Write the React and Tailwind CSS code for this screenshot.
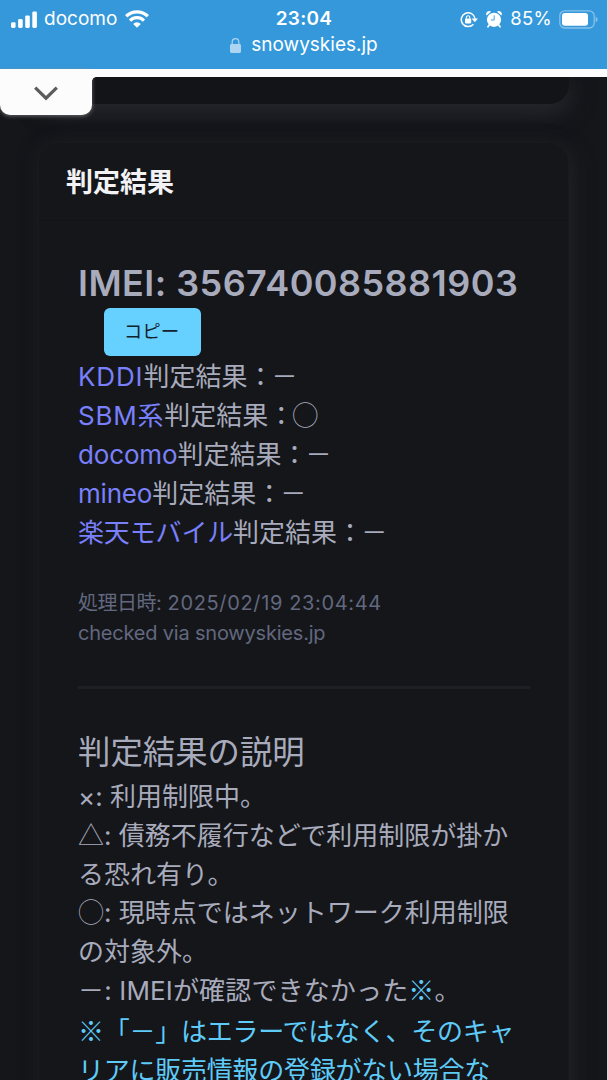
import clsx from "clsx";

const FONT = "font-['Inter','Noto_Sans_CJK_JP',sans-serif]";
const CJK = "font-['Noto_Sans_CJK_JP',sans-serif]";

const RESULTS = [
  { carrier: "KDDI", mark: "－", track: "tracking-[0.85px]" },
  { carrier: "SBM系", mark: "◯", track: "tracking-[0.75px]" },
  { carrier: "docomo", mark: "－", track: "tracking-[-0.15px]" },
  { carrier: "mineo", mark: "－", track: "tracking-[-0.2px]" },
  { carrier: "楽天モバイル", mark: "－", track: "tracking-[-0.15px]" },
];

const NOTES = [
  { sign: "×", text: ": 利用制限中。" },
  { sign: "△", text: ": 債務不履行などで利用制限が掛か", cjk: true },
  { text: "る恐れ有り。" },
  { sign: "◯", text: ": 現時点ではネットワーク利用制限", cjk: true },
  { text: "の対象外。" },
];

const WARNING = ["※「－」はエラーではなく、そのキャ", "リアに販売情報の登録がない場合な"];

function Signal() {
  return (
    <svg className="ml-px h-[17px] w-[26px]" viewBox="0 0 26 17" fill="#fff">
      <rect x="0" y="11.2" width="4.6" height="5.8" rx="1.4" />
      <rect x="7.1" y="8" width="4.6" height="9" rx="1.4" />
      <rect x="14.2" y="4.4" width="4.6" height="12.6" rx="1.4" />
      <rect x="21.3" y="0.4" width="4.6" height="16.6" rx="1.4" />
    </svg>
  );
}

function Wifi() {
  return (
    <svg className="h-[18px] w-6" viewBox="0 0 24 18" fill="none" stroke="#fff" strokeWidth="3.3">
      <path d="M1.2 6.2 A15.4 15.4 0 0 1 22.8 6.2" />
      <path d="M5 10.6 A9.8 9.8 0 0 1 19 10.6" />
      <path d="M8.2 13.9 A5.4 5.4 0 0 1 15.8 13.9 L12 17.8 Z" fill="#fff" stroke="none" />
    </svg>
  );
}

function RotationLock() {
  return (
    <svg className="h-[17px] w-[18px]" viewBox="0 0 18 17" fill="none" stroke="#fff" strokeWidth="1.5">
      <path d="M13.4 13.2 A6.9 6.9 0 1 1 15 7.6" />
      <path d="M11.6 7.4 L18 7.4 L14.8 11.2 Z" fill="#fff" stroke="none" />
      <rect x="5" y="7.6" width="6.2" height="4.8" rx="0.8" fill="#fff" stroke="none" />
      <path d="M6.4 7.8 V6.4 A1.7 1.7 0 0 1 9.8 6.4 V7.8" strokeWidth="1.1" />
    </svg>
  );
}

function Alarm() {
  return (
    <svg className="h-[17px] w-4" viewBox="0 0 16 17">
      <circle cx="8" cy="8.8" r="7.1" fill="#fff" />
      <path d="M0.6 4.6 A3 3 0 0 1 5 0.7 Z M15.4 4.6 A3 3 0 0 0 11 0.7 Z" fill="#fff" />
      <path d="M3.4 13.8 L2 15.8 M12.6 13.8 L14 15.8" stroke="#fff" strokeWidth="1.8" strokeLinecap="round" />
      <path d="M8.2 4.4 V9 H4.8" fill="none" stroke="#3498db" strokeWidth="0.9" />
    </svg>
  );
}

function Battery() {
  return (
    <svg className="h-[19px] w-[39px]" viewBox="0 0 39 19" fill="none">
      <rect x="0.8" y="0.8" width="34.4" height="17.2" rx="5" stroke="#86c1ea" strokeWidth="1.3" />
      <rect x="3" y="3" width="26" height="12.8" rx="2.8" fill="#fff" />
      <path d="M36.6 6.4 Q38.6 7.2 38.6 9.4 T36.6 12.4 Z" fill="#86c1ea" />
    </svg>
  );
}

function StatusBar() {
  return (
    <header className="h-[69px] bg-[#3498db] pt-[5px] text-white">
      <div className="grid h-6 grid-cols-[1fr_auto_1fr] items-center pl-2.5 pr-[10px]">
        <div className="flex items-center">
          <Signal />
          <span className="ml-[7px] mr-2 text-[19px]">docomo</span>
          <Wifi />
        </div>
        <span className="text-[19px] font-semibold tracking-[0.3px]">23:04</span>
        <div className="flex items-center justify-end">
          <RotationLock />
          <span className="ml-2">
            <Alarm />
          </span>
          <span className="ml-2 mr-[7px] text-[18.5px] tracking-[0.3px]">85%</span>
          <Battery />
        </div>
      </div>
      <div className="flex h-[33px] items-center justify-center gap-2.5">
        <svg className="h-[15px] w-[11px]" viewBox="0 0 11 15" fill="none">
          <rect x="0" y="6" width="11" height="9" rx="1.4" fill="#add5f1" />
          <path d="M2.2 6.6 V4 A3.3 3.3 0 0 1 8.8 4 V6.6" stroke="#add5f1" strokeWidth="1.2" />
        </svg>
        <span className="text-[19px]">snowyskies.jp</span>
      </div>
    </header>
  );
}

export default function App() {
  return (
    <div className={clsx("relative h-[1080px] w-[608px] overflow-hidden bg-[#15161a]", FONT)}>
      <StatusBar />
      <div className="relative z-20 h-2 bg-[#fcfcfc]" />

      {/* pull-down tab hanging from the browser bar */}
      <div className="absolute left-0 top-[69px] z-10 flex h-[46px] w-[92px] items-center justify-center rounded-b-[10px] bg-[#fcfcfc] shadow-[0_1px_4px_rgba(140,140,145,0.7)]">
        <svg className="mr-px mt-0.5 h-4 w-6" viewBox="0 0 24 16" fill="none" stroke="#5c5c5e" strokeWidth="3.2">
          <path d="M1.2 2.6 L12 13.2 L22.8 2.6" />
        </svg>
        {/* inverse corner where the tab meets the bar */}
        <span className="absolute -right-1 top-2 size-1 bg-[radial-gradient(circle_at_100%_100%,transparent_3.5px,#fcfcfc_4px)]" />
      </div>

      <main className="h-[1003px] overflow-hidden px-[39px]">
        {/* bottom edge of the previous card */}
        <div className="h-[27px] rounded-b-[20px] bg-[#131418] shadow-[2px_8px_24px_#28292e,-6px_0_24px_#1b1c20]" />

        <section className="relative mt-[39px] h-[1000px] w-[529px] rounded-t-[20px] bg-[#15161a] shadow-[0_0_0_1px_#191a1e,6px_4px_20px_#202125,-4px_-2px_16px_#18191d]">
          <h2 className="h-[78px] border-b border-[#121317] pl-[27px] text-[27px] font-bold leading-[80px] text-[#f2f2f5]">
            判定結果
          </h2>

          <div className="whitespace-nowrap pl-[39px] pr-[38px] pt-[38px] text-[#a8abbc]">
            <h3 className="h-[49px] text-[36px] font-semibold leading-[49px] tracking-[0.45px]">
              IMEI: 356740085881903
            </h3>
            <button className="ml-[26px] block h-12 w-[97px] rounded-md bg-[#66d1ff] pr-0.5 text-[18.5px] text-[#12222c]">
              コピー
            </button>

            <ul className="relative top-px text-[26px] leading-[39px]">
              {RESULTS.map((r) => (
                <li key={r.carrier} className="h-[39px]">
                  <span className={clsx("text-[#7980fa]", r.track)}>{r.carrier}</span>判定結果：
                  <span className={clsx("-ml-0.5 leading-none", CJK)}>{r.mark}</span>
                </li>
              ))}
            </ul>

            <div className="mt-[37px] text-[20px] leading-[30px] text-[#62687f]">
              <p>
                <span className="tracking-[-0.5px]">処理日時:</span>
                <span className="tracking-[0.65px]"> 2025/02/19 23:04:44</span>
              </p>
              <p className="tracking-[-0.2px]">checked via snowyskies.jp</p>
            </div>

            <hr className="mt-[38px] h-[3px] border-0 bg-[#1f2025]" />

            <h3 className="mt-[39px] h-[50px] text-[32.4px] leading-[49px]">判定結果の説明</h3>
            <div className="text-[26px] leading-[38.8px]">
              {NOTES.map((n) => (
                <p key={n.text} className="h-[38.8px]">
                  {n.sign && <span className={clsx(n.cjk && CJK, n.cjk && "font-light leading-none")}>{n.sign}</span>}
                  {n.text}
                </p>
              ))}
              <p className="h-[38.8px] tracking-[0.15px]">
                －: IMEIが確認できなかった<span className={clsx("leading-none text-[#5ecbf8]", CJK)}>※</span>。
              </p>
              {WARNING.map((line) => (
                <p key={line} className={clsx("h-[38.8px] tracking-[-0.25px] text-[#5ecbf8]", CJK)}>
                  {line}
                </p>
              ))}
            </div>
          </div>
        </section>
      </main>
      <div className="absolute right-0 top-0 z-20 h-full w-px bg-[#d9dadd]" />
    </div>
  );
}
